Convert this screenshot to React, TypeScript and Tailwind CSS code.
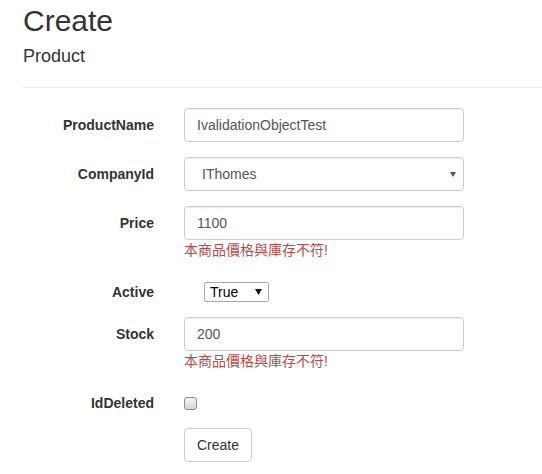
import React from "react";

const font = { fontFamily: '"Liberation Sans", Arial, "Noto Sans CJK TC", sans-serif' };

function Label({ children }: { children: React.ReactNode }) {
  return (
    <div className="w-[131px] shrink-0 pt-[7px] text-right text-[14px] font-bold leading-[20px] text-[#333]">
      {children}
    </div>
  );
}

function TextInput({ value }: { value: string }) {
  return (
    <input
      readOnly
      defaultValue={value}
      className="block h-[34px] w-[280px] rounded-[4px] border border-[#ccc] bg-white px-[12px] text-[14px] leading-[20px] text-[#555] shadow-[inset_0_1px_1px_rgba(0,0,0,0.075)] outline-none"
      style={font}
    />
  );
}

function ErrorText() {
  return (
    <div
      className="text-[14px] leading-[20px] text-[#b94a48]"
      style={{ fontFamily: '"Liberation Sans", Arial, "Noto Sans CJK TC", sans-serif' }}
    >
      本商品價格與庫存不符!
    </div>
  );
}

export default function App() {
  return (
    <div className="min-h-[474px] w-[542px] overflow-hidden bg-white pt-[4px] pl-[23px] text-[#333]" style={font}>
      <h2 className="text-[30px] font-normal leading-[33px] text-[#333]">Create</h2>
      <h4 className="mt-[10px] text-[18px] font-normal leading-[19.8px] text-[#333]">Product</h4>
      <hr className="mt-[20px] border-0 border-t border-[#eee]" />
      <div className="mt-[20px]">
        <div className="mb-[15px] flex">
          <Label>ProductName</Label>
          <div className="ml-[30px]">
            <TextInput value="IvalidationObjectTest" />
          </div>
        </div>
        <div className="mb-[15px] flex">
          <Label>CompanyId</Label>
          <div className="ml-[30px]">
            <div className="relative flex h-[34px] w-[280px] items-center rounded-[4px] border border-[#ccc] bg-white pl-[17px] text-[14px] leading-[20px] text-[#555] shadow-[inset_0_1px_1px_rgba(0,0,0,0.075)]">
              IThomes
              <svg className="absolute right-[7px] top-[14px]" width="6" height="5" viewBox="0 0 6 5">
                <path d="M0 0 L6 0 L3 5 Z" fill="#555" />
              </svg>
            </div>
          </div>
        </div>
        <div className="mb-[15px] flex">
          <Label>Price</Label>
          <div className="ml-[30px]">
            <TextInput value="1100" />
            <ErrorText />
          </div>
        </div>
        <div className="mb-[15px] flex">
          <Label>Active</Label>
          <div className="ml-[50px]">
            <div className="relative mt-[7px] flex h-[20px] w-[65px] items-center rounded-[2px] border border-[#a9a9a9] bg-white pl-[5px] text-[14px] leading-[18px] text-black">
              True
              <svg className="absolute right-[6px] top-[6px]" width="7" height="6" viewBox="0 0 7 6">
                <path d="M0 0 L7 0 L3.5 6 Z" fill="#111" />
              </svg>
            </div>
          </div>
        </div>
        <div className="mb-[15px] flex">
          <Label>Stock</Label>
          <div className="ml-[30px]">
            <TextInput value="200" />
            <ErrorText />
          </div>
        </div>
        <div className="mb-[15px] flex">
          <Label>IdDeleted</Label>
          <div className="ml-[30px]">
            <div className="mt-[11px] h-[13px] w-[13px] rounded-[3px] border border-[#8e8e8e] bg-gradient-to-b from-[#f4f4f4] to-[#d8d8d8]" />
          </div>
        </div>
        <div className="flex">
          <div className="w-[131px] shrink-0" />
          <div className="ml-[30px]">
            <button className="h-[34px] w-[68px] rounded-[4px] border border-[#ccc] bg-white text-[14px] leading-[20px] text-[#333]" style={font}>
              Create
            </button>
          </div>
        </div>
      </div>
    </div>
  );
}
